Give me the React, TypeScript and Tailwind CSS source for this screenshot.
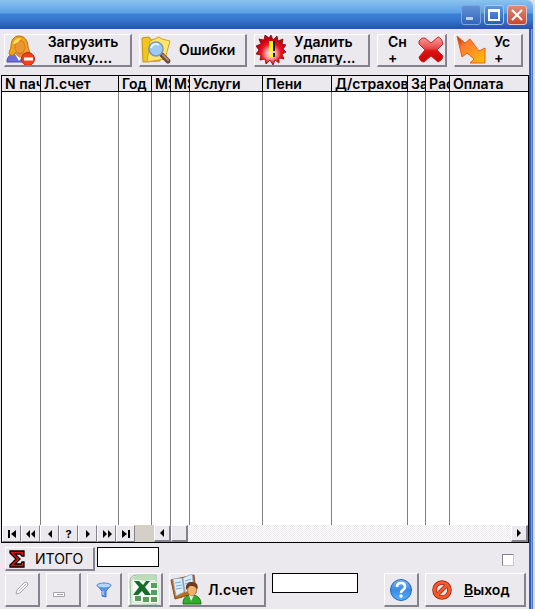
import type { ReactNode } from "react";

const raised =
  "border border-t-white border-l-white border-r-[#84828c] border-b-[#84828c] border-r-2 border-b-2 bg-[#ebe9ed]";

function UserIcon() {
  return (
    <svg viewBox="0 0 30 31" className="w-[30px] h-[31px] shrink-0">
      <path d="M1 27c0-5 3-8 8-8h8c5 0 7 3 7 8z" fill="#6c6fd8" stroke="#4a4cae" />
      <path d="M9 19l4 7 5-7z" fill="#fff" />
      <path d="M4 20C2 18 4 16 5 12 5 5 8 1 13 1s9 4 9 11c1 4 3 6 0 8-3 1-5-1-5-3h-7c-1 3-4 4-6 3z" fill="#efa21c" stroke="#b96c0c" />
      <path d="M11 16h6l1 4-4 3-4-3z" fill="#e08a30" />
      <ellipse cx="14" cy="12" rx="5" ry="6.5" fill="#ea9434" stroke="#c06d15" strokeWidth=".7" />
      <path d="M7 9c1-4 4-6 8-6-2 4-5 6-8 6" fill="#ffe05e" />
      <circle cx="22" cy="24" r="6.5" fill="#f0421c" stroke="#b92108" />
      <rect x="18" y="22.5" width="9" height="3" fill="#fff" />
    </svg>
  );
}

function FolderIcon() {
  return (
    <svg viewBox="0 0 32 30" className="w-8 h-[30px] shrink-0">
      <path d="M2 3l7-1 2 3 8-1 1 22-17 1z" fill="#f2c51d" stroke="#c4930e" />
      <path d="M10 6l9-4 3 2 8 2-5 18-18 3z" fill="#ffe56b" stroke="#d2a21a" />
      <path d="M22 20l6 6" stroke="#694c40" strokeWidth="5" strokeLinecap="round" />
      <path d="M23 20l5 5" stroke="#b78c6c" strokeWidth="2" strokeLinecap="round" />
      <circle cx="16" cy="14" r="7" fill="#9ccaf5" stroke="#7c97b8" strokeWidth="1.6" />
      <path d="M11 13c1-4 5-5 8-3" fill="none" stroke="#e4f4ff" strokeWidth="2" />
    </svg>
  );
}

function AlertIcon() {
  return (
    <svg viewBox="0 0 30 30" className="size-[30px] shrink-0">
      <defs>
        <radialGradient id="alert" cx=".5" cy=".62">
          <stop offset="0" stopColor="#fff" />
          <stop offset=".35" stopColor="#f99" />
          <stop offset=".65" stopColor="#f01420" />
          <stop offset="1" stopColor="#c40010" />
        </radialGradient>
      </defs>
      <path
        d="M15 0l2 5 4-4 1 5 5-2-1 5 4 1-3 4 3 3-4 2 2 5-5-1v5l-4-3-2 5-3-5-4 4-1-5-5 1 1-5-5-1 3-4-3-4 5-2-2-5 5 1 1-5 4 3z"
        fill="url(#alert)"
        stroke="#7c0a12"
        strokeWidth=".8"
      />
      <path d="M15 6h4v10h-4zM15 18h4v4h-4z" fill="#111" />
      <path d="M13 6h4v10h-4zM13 18h4v4h-4z" fill="#ff0" />
    </svg>
  );
}

function CrossIcon() {
  return (
    <svg viewBox="0 0 28 28" className="size-7 shrink-0">
      <defs>
        <linearGradient id="cross" x2="0" y2="1">
          <stop stopColor="#f9a09b" />
          <stop offset=".45" stopColor="#e84848" />
          <stop offset=".55" stopColor="#dd1515" />
          <stop offset="1" stopColor="#c00" />
        </linearGradient>
      </defs>
      <path
        d="M2 5q3-4 6-3l6 5 7-6q4 1 5 7l-6 6 6 6q0 4-5 6l-7-6-7 6q-4 0-5-5l6-7-6-6z"
        fill="url(#cross)"
        stroke="#c32a2a"
        strokeLinejoin="round"
      />
    </svg>
  );
}

function BoltIcon() {
  return (
    <svg viewBox="0 0 30 30" className="size-[30px] shrink-0">
      <defs>
        <linearGradient id="bolt" x2="1" y2="1">
          <stop stopColor="#a82210" />
          <stop offset=".3" stopColor="#ff7b30" />
          <stop offset="1" stopColor="#ffc000" />
        </linearGradient>
      </defs>
      <path d="M1 1l8 7 5-4 9 12 6-3v15H14l4-4-7-6-5 4z" fill="url(#bolt)" stroke="#e4601c" strokeLinejoin="round" />
    </svg>
  );
}

function SigmaIcon() {
  return (
    <svg viewBox="0 0 16 18" className="w-4 h-[18px] shrink-0">
      <path
        d="M1 1h14v5h-2l-2-2H6l5 5-5 5h6l1-2h2v5H1v-2l6-6-6-6z"
        fill="#e01010"
        stroke="#000"
        strokeWidth="1.3"
      />
    </svg>
  );
}

function PencilIcon() {
  return (
    <svg viewBox="0 0 16 16" className="size-4">
      <path d="M2 14l1-4 8-8q3 0 3 3l-8 8z" fill="#f6f5f7" stroke="#aaa8ae" />
      <path d="M5 11l7-7" stroke="#bbb9bf" />
    </svg>
  );
}

function BarIcon() {
  return (
    <svg viewBox="0 0 12 5" className="w-3 h-[5px]">
      <path d="M.5.5h11v4H.5z" fill="#fff" stroke="#a5a3a8" />
      <path d="M4 2.5h6" stroke="#a5a3a8" />
    </svg>
  );
}

function FunnelIcon() {
  return (
    <svg viewBox="0 0 16 16" className="size-4">
      <path d="M1 3l5 6v5l4 1V9l5-6z" fill="#5d95e8" stroke="#3d70c8" />
      <ellipse cx="8" cy="3.5" rx="7" ry="2.5" fill="#b6d6fc" stroke="#5685d4" />
      <path d="M7 9v4" stroke="#d7eaff" />
    </svg>
  );
}

function ExcelIcon() {
  return (
    <svg viewBox="0 0 32 32" className="size-8 shrink-0">
      <path d="M1 8q0-7 7-7h19v30H2z" fill="#eff6ef" stroke="#8db994" />
      <path d="M2 7q1-5 6-5h18v4z" fill="#b9dcb9" />
      <path d="M3 5L29 8l2 22-28-2z" fill="#f7fbf5" stroke="#bcd4bc" strokeWidth=".6" />
      <path d="M22 9h6v5h-6zM22 16h6v5h-6zM22 23h6v5h-6zM14 23h6v5h-6zM6 22h6v5H6z" fill="#53a05a" />
      <path d="M5 7h5l4 4 3-4h4l-5 6 6 8h-6l-3-4-4 4H4l6-8z" fill="#176c2c" />
    </svg>
  );
}

function BookIcon() {
  return (
    <svg viewBox="0 0 32 32" className="size-8 shrink-0">
      <path d="M1 6L24 1l2 18L5 25z" fill="#bd6d23" stroke="#8f4b14" />
      <path d="M3 5l9-1 2 14-8 4zM13 4l9-4 2 16-9 2z" fill="#dceeff" stroke="#87add5" strokeWidth=".7" />
      <path d="M5 9l6-1M6 12l6-1M6 15l6-1M15 7l6-2M15 10l6-2M16 13l6-2" stroke="#73a8e2" />
      <path d="M13 30c0-6 3-8 6-9h5c4 1 7 4 7 9z" fill="#34ad2a" stroke="#197015" />
      <path d="M19 21l2 6 3-6z" fill="#fff" />
      <ellipse cx="22" cy="16" rx="4.5" ry="6" fill="#eeb16e" stroke="#a8662b" strokeWidth=".7" />
      <path d="M16 16c-1-7 3-8 6-8 5 0 7 4 5 8-1-4-4-4-7-4z" fill="#6e3c1c" />
    </svg>
  );
}

function HelpIcon() {
  return (
    <svg viewBox="0 0 24 24" className="size-6">
      <defs>
        <linearGradient id="help" x2="0" y2="1">
          <stop stopColor="#79b8f5" />
          <stop offset=".5" stopColor="#3a8ae6" />
          <stop offset="1" stopColor="#53b3fa" />
        </linearGradient>
      </defs>
      <circle cx="12" cy="12" r="10.5" fill="url(#help)" stroke="#2865b8" />
      <path d="M8 9q0-4 4-4t4 4q0 2-2 3t-2 3" fill="none" stroke="#fff" strokeWidth="2.6" />
      <circle cx="12" cy="18" r="1.7" fill="#fff" />
    </svg>
  );
}

function StopIcon() {
  return (
    <svg viewBox="0 0 20 20" className="size-5 shrink-0">
      <circle cx="10" cy="10" r="7.5" fill="none" stroke="#a5230c" strokeWidth="4.6" />
      <path d="M5 15L15 5" stroke="#a5230c" strokeWidth="4" />
      <circle cx="10" cy="10" r="7.5" fill="none" stroke="#f2592c" strokeWidth="3" />
      <path d="M5 15L15 5" stroke="#f2592c" strokeWidth="2.5" />
    </svg>
  );
}

function Glyph({ d }: { d: string }) {
  return (
    <svg viewBox="0 0 12 8" className="w-3 h-2 shrink-0">
      <path d={d} fill="#000" />
    </svg>
  );
}

const arrowLeft = "M8 0v8L4 4z";
const arrowRight = "M4 0v8l4-4z";

const navButtons = [
  { label: "Первая", d: "M2 0h2v8H2zM10 0v8L5 4z" },
  { label: "Назад на страницу", d: "M5 0v8L1 4zM10 0v8L6 4z" },
  { label: "Назад", d: arrowLeft },
  { label: "Найти", d: "" },
  { label: "Вперёд", d: arrowRight },
  { label: "Вперёд на страницу", d: "M2 0v8l4-4zM7 0v8l4-4z" },
  { label: "Последняя", d: "M2 0v8l5-4zM8 0h2v8H8z" },
];

const columns = [
  { title: "N пачки", width: "w-[39px]" },
  { title: "Л.счет", width: "w-[78px]" },
  { title: "Год", width: "w-[33px]" },
  { title: "MS", width: "w-[19px]" },
  { title: "MS", width: "w-[19px]" },
  { title: "Услуги", width: "w-[73px]" },
  { title: "Пени", width: "w-[69px]" },
  { title: "Д/страхов", width: "w-[76px]" },
  { title: "За", width: "w-[18px]" },
  { title: "Рас", width: "w-6" },
  { title: "Оплата", width: "" },
];

function ToolButton({ className, label, children }: { className: string; label?: string; children: ReactNode }) {
  return (
    <button aria-label={label} className={`${raised} flex items-center shrink-0 overflow-hidden ${className}`}>
      {children}
    </button>
  );
}

function TitleBar() {
  return (
    <header className="h-[29px] flex items-center justify-end gap-[3px] pr-[6px] pt-px bg-[linear-gradient(#8ac3ee_0px,#78b5ed_5px,#5ba0e6_13px,#3b81d5_14px,#3676cd_20px,#2a53ae_28px)]">
      <button
        aria-label="Свернуть"
        className="size-5 rounded-[3px] border border-[#7ea6dc] bg-linear-to-b from-[#5f93d4] to-[#3565ba] flex items-end p-1"
      >
        <span className="w-[7px] h-[3px] bg-[#b9d2f2]" />
      </button>
      <button
        aria-label="Развернуть"
        className="size-5 rounded-[3px] border border-[#a8c9f0] bg-linear-to-b from-[#5e98de] to-[#2c60b8] p-[3px]"
      >
        <span className="block size-full border-2 border-t-[3px] border-white" />
      </button>
      <button
        aria-label="Закрыть"
        className="size-5 rounded-[3px] border border-[#eac0bc] bg-linear-to-b from-[#dd8a76] to-[#cb4630] flex items-center justify-center"
      >
        <svg viewBox="0 0 12 12" className="size-3">
          <path d="M1 1l10 10M11 1L1 11" stroke="#fff" strokeWidth="2" />
        </svg>
      </button>
    </header>
  );
}

function Toolbar() {
  return (
    <div className="flex gap-[7px] pl-1 pt-[5px] pb-2 leading-4">
      <ToolButton className="w-32 h-[33px] pl-px">
        <UserIcon />
        <span className="flex-1 text-center">
          Загрузить
          <br />
          пачку....
        </span>
      </ToolButton>
      <ToolButton className="w-[108px] h-[33px]">
        <FolderIcon />
        <span className="pl-[7px]">Ошибки</span>
      </ToolButton>
      <ToolButton className="w-[116px] h-[33px] pl-px">
        <AlertIcon />
        <span className="pl-2 text-left">
          Удалить
          <br />
          оплату...
        </span>
      </ToolButton>
      <ToolButton className="w-[70px] h-[33px] justify-between pl-[10px]">
        <span className="text-left">
          Сн
          <br />+
        </span>
        <CrossIcon />
      </ToolButton>
      <ToolButton className="w-[69px] h-[33px] pl-px">
        <BoltIcon />
        <span className="pl-2 text-left">
          Ус
          <br />+
        </span>
      </ToolButton>
    </div>
  );
}

function Grid() {
  return (
    <section className="ml-px border border-black bg-white">
      <table className="w-full table-fixed border-separate border-spacing-0">
        <thead>
          <tr className="bg-[#ebe9ed]">
            {columns.map((c, i) => (
              <th
                key={i}
                className={`${c.width} h-4 p-0 pl-[3px] leading-[15px] text-left font-semibold whitespace-nowrap overflow-hidden border-r border-b border-black last:border-r-0`}
              >
                {c.title}
              </th>
            ))}
          </tr>
        </thead>
        <tbody>
          <tr className="h-[433px]">
            {columns.map((_, i) => (
              <td key={i} className="border-r border-[#808080] last:border-r-0" />
            ))}
          </tr>
        </tbody>
      </table>
      <div className="flex h-[17px]">
        {navButtons.map((b) => (
          <button
            key={b.label}
            aria-label={b.label}
            className="w-[19px] flex items-center justify-center border border-t-white border-l-white border-r-[#84828c] border-b-[#84828c] bg-[#ebe9ed] text-[11px] leading-3 font-bold"
          >
            {b.d ? <Glyph d={b.d} /> : "?"}
          </button>
        ))}
        <span className="w-[19px] bg-[#d4d0c8]" />
        <button aria-label="Влево" className={`${raised} w-[17px] flex items-center justify-center`}>
          <Glyph d={arrowLeft} />
        </button>
        <div className="flex-1 bg-[repeating-conic-gradient(#fff_0_25%,#ebe9ed_0_50%)] bg-size-[2px_2px]">
          <div className={`${raised} w-[17px] h-full`} />
        </div>
        <button aria-label="Вправо" className={`${raised} w-[17px] flex items-center justify-center`}>
          <Glyph d={arrowRight} />
        </button>
      </div>
    </section>
  );
}

function Footer() {
  return (
    <footer className="pl-[5px] pr-[3px] pt-1 pb-[3px]">
      <div className="flex gap-[2px]">
        <ToolButton className="w-[90px] h-6 gap-[10px] pl-[3px]">
          <SigmaIcon />
          <span className="font-normal">ИТОГО</span>
        </ToolButton>
        <input aria-label="Итого" className="w-[62px] h-5 px-1 bg-white border border-black" />
        <input
          type="checkbox"
          aria-label="Отметить"
          className="appearance-none size-3 ml-auto mr-3 mt-[7px] bg-white border border-t-[#84828c] border-l-[#84828c] border-[#c9c7cc]"
        />
      </div>
      <div className="flex gap-[6px] pt-[2px]">
        <ToolButton label="Изменить" className="w-[35px] h-[34px] justify-center pb-1">
          <PencilIcon />
        </ToolButton>
        <ToolButton label="Удалить" className="w-[35px] h-[34px] items-end pl-[6px] pb-2">
          <BarIcon />
        </ToolButton>
        <ToolButton label="Фильтр" className="w-[35px] h-[34px] justify-center">
          <FunnelIcon />
        </ToolButton>
        <ToolButton label="Excel" className="w-[35px] h-[34px] justify-center">
          <ExcelIcon />
        </ToolButton>
        <ToolButton className="w-[97px] h-[34px]">
          <BookIcon />
          <span className="pl-[6px]">Л.счет</span>
        </ToolButton>
        <input aria-label="Лицевой счет" className="w-[86px] h-5 px-1 bg-white border border-black" />
        <ToolButton label="Справка" className="w-[35px] h-[34px] justify-center ml-auto">
          <HelpIcon />
        </ToolButton>
        <ToolButton className="w-[101px] h-[34px] pl-[6px] gap-3">
          <StopIcon />
          <span>
            <u>В</u>ыход
          </span>
        </ToolButton>
      </div>
    </footer>
  );
}

export default function App() {
  return (
    <div className="min-h-screen bg-[#dddfe8] pr-[2px] text-[14px] font-semibold text-black font-['Inter',sans-serif]">
      <div className="flex flex-col min-h-screen rounded-tr-[6px] overflow-hidden">
        <TitleBar />
        <div className="flex-1 pr-1 bg-[linear-gradient(to_left,#4a78d4_0_1px,#7ba5ee_1px_2px,#2d5bbd_2px_4px)]">
          <main className="min-h-full bg-[#ebe9ed]">
            <Toolbar />
            <Grid />
            <Footer />
          </main>
        </div>
      </div>
    </div>
  );
}
